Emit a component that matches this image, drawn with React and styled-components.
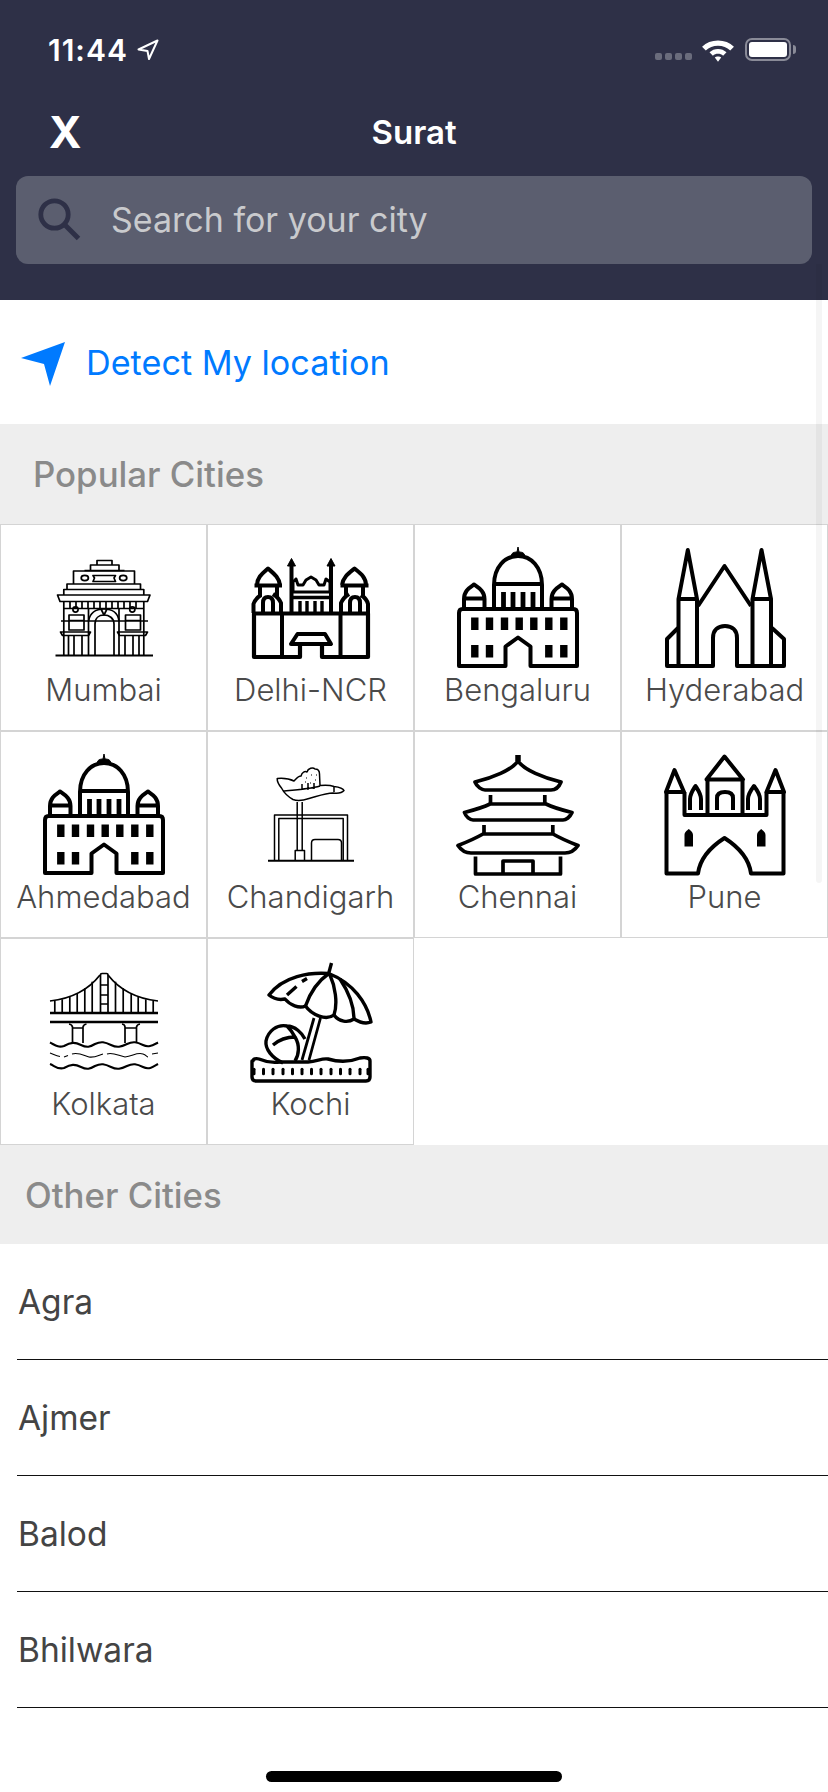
import React from 'react'
import styled, {createGlobalStyle} from 'styled-components'

const GlobalStyle = createGlobalStyle`
  html, body { margin: 0; padding: 0; background: #fff; }
  body { font-family: Inter, "Noto Sans", "Liberation Sans", sans-serif; }
  * { box-sizing: border-box; }
`

function IndiaGate() {
  return (
    <Drawing viewBox="0 0 122 122" $weight={1.7}>
      <path d="M12.5 108.5 H110" strokeWidth="2" />
      <path d="M54 18 V13.5 H69 V18 M47.5 23.5 V18 H76 V23.5 M41.5 23.5 H81.5" />
      <path d="M30.5 37 V24 H91.5 V37" />
      <ellipse cx="41.8" cy="31" rx="3.6" ry="2.6" />
      <ellipse cx="80.2" cy="31" rx="3.6" ry="2.6" />
      <path d="M50 28.5 H72.5 L71 31 L72.5 34.5 H50 L51.5 31Z" />
      <path d="M24 42.5 V37 H97.5 V42.5 M20.8 48 V42.5 H100.8 V48 M14.5 48 H107 L104.5 54.5 H17Z" />
      <path d="M20.8 54.5 V108 M100.8 54.5 V108 M20.8 61.5 H100.8 M27 54.5 V61.5 M33 54.5 V61.5 M39 54.5 V61.5 M45 54.5 V61.5 M51 54.5 V61.5 M57 54.5 V61.5 M63 54.5 V61.5 M69 54.5 V61.5 M75 54.5 V61.5 M81 54.5 V61.5 M87 54.5 V61.5 M93 54.5 V61.5" />
      <path d="M45.5 61.5 V108 M76 61.5 V108" />
      <path d="M45.5 74 C47 66 53 62 61 62 C69 62 75 66 76 74" />
      <path d="M52 108 V77 C52 71 56 68 61 68 C66 68 71 71 71 77 V108" />
      <path d="M58 62 L61 68 L64 62" />
      <circle cx="32.5" cy="62.5" r="2.6" />
      <circle cx="89.3" cy="62.5" r="2.6" />
      <path d="M26 68 H41 V83 H26Z M26 73.5 H41 M82.5 68 H97.5 V83 H82.5Z M82.5 73.5 H97.5 M18 74 H105" />
      <path d="M17.5 85 H47.5 L45.5 88.5 H19.5Z M74.5 85 H104.5 L102.5 88.5 H76.5Z" />
      <path d="M25.5 88.5 V108 M31 88.5 V108 M39 88.5 V108 M82 88.5 V108 M90 88.5 V108 M96 88.5 V108" />
    </Drawing>
  )
}

function RedFort() {
  return (
    <Drawing viewBox="0 0 122 122" $weight={4}>
      <path d="M4 66.5 H118 V110 H72 V97 H50 V110 H4Z" strokeWidth="4.2" />
      <path d="M32 66 V110 M90.5 66 V110" />
      <path d="M47.5 87 H75 L81 97 H41Z" />
      <path d="M41.5 66 V15 M81 66 V15" />
      <path d="M37.5 19 L41.5 11.5 L45.5 19Z M77 19 L81 11.5 L85 19Z" fill="#000" strokeWidth="1" />
      <path d="M43 35 V45 H80 V35 L76 32 L74 38 L69 38 L66 33 L61 30 L56 33 L53 38 L48 38 L46 32Z" strokeWidth="3" />
      <path d="M42 50.5 H81 M50 54 V66 M57 54 V66 M65 54 V66 M72 54 V66" strokeWidth="3.4" />
      <path d="M7 38 C7 30 13 26 18 21.5 C23 26 29 30 30 38 M4.5 38.5 H32 M10 39 V50 M27 39 V50" />
      <path d="M92 38 C93 30 99 26 104.5 21.5 C110 26 116 30 116 38 M90.5 38.5 H118.5 M96 39 V50 M113 39 V50" />
      <path d="M3.5 66 V57 C5 52 8 50 11 48 M31 66 V56 C29 51 26 49 23 47 M13 66 V56 C13 52 15 50 18 50 C21 50 23 52 23 56 V66" />
      <path d="M91 66 V56 C93 51 96 49 99 47 M118 66 V57 C117 52 114 50 111 48 M100 66 V56 C100 52 102 50 105 50 C108 50 110 52 110 56 V66" />
    </Drawing>
  )
}

function Dome() {
  const top = [17.8, 32.5, 47.5, 62.2, 76.8, 91.8, 106.8]
  const bottom = [17.8, 32.5, 91.8, 106.8]
  return (
    <Drawing viewBox="0 0 122 122" $weight={4}>
      <path d="M5.5 62 H116.5 Q120 62 120 66 V119 H73.5 V99.5 L61 90.5 L48.5 99.5 V119 H2 V66 Q2 62 5.5 62Z" />
      <path d="M37 61 V38 C37 20 48 9 61 9 C74 9 85 20 85 38 V61 M37 37 H85" />
      <path d="M54.5 8 Q55 5 60 5 L61 0 L62 5 Q67 5 67.5 8Z" fill="#000" strokeWidth="1" />
      <path d="M46.5 60 V45 M56 60 V45 M66 60 V45 M76 60 V45" strokeWidth="4.8" />
      <path d="M7 61 V52 C7 44 12 41 17 37.5 C22 41 27.5 44 27.5 52 V61 M7 51.5 H27.5" />
      <path d="M94.5 61 V52 C94.5 44 100 41 105 37.5 C110 41 115 44 115 52 V61 M94.5 51.5 H115" />
      {top.map(x => <rect key={x} x={x - 3.7} y="70.5" width="7.4" height="12.5" fill="#000" stroke="none" />)}
      {bottom.map(x => <rect key={x} x={x - 3.7} y="98" width="7.4" height="12.5" fill="#000" stroke="none" />)}
    </Drawing>
  )
}

function Church() {
  return (
    <Drawing viewBox="0 0 122 122" $weight={4}>
      <path d="M14.5 52 L23.8 3 L33 52Z M14.5 52 V118 M33 52 V118" />
      <path d="M88.5 52 L97.5 3 L107 52Z M88.5 52 V118 M107 52 V118" />
      <path d="M34 59 L60.5 19 L87 59" />
      <path d="M14 81 L3 92 V119 H49 V91 C49 83 54 79 61 79 C68 79 73 83 73 91 V119 H120 V92 L108 81" />
    </Drawing>
  )
}

function Chandigarh() {
  return (
    <Drawing viewBox="0 0 122 122" $weight={1.5}>
      <path d="M18 106.7 H104" strokeWidth="2" />
      <path d="M24.5 106 V61 H97.5 V106 M28.8 106 V64.5 H93.2 V106" />
      <path d="M47.2 96 V48 M52.2 96 V48 M45.2 106 V96.5 H54.5 V106" />
      <path d="M61.5 106 V89 Q61.5 85.5 65 85.5 H88 Q91.5 85.5 91.5 89 V106" />
      <path d="M27.2 24.5 C33 24 40 25 44 27 C46 25 48 22 51 22 C52 18 55 17 57 18 C58 14 63 13 65 15 C68 15 69.5 17 69.5 20 L70 31.5 C75 31 80 31 84 32.5 C88 33 93 34 94 36.5 C92 39 87 39.5 83 39 C76 39 68 42 59 44.5 C53 46.5 47 47 43 45.5 C37 42 34 39 31.5 34 C29 31 27 28 27.2 24.5Z" />
      <path d="M33 37 C45 36 60 35 70 32 M52 30 V36 M58 29 V36 M64 29 V35 M84 33 V38" />
      <path d="M56 24 h1 M61 21 h1 M65 26 h1 M60 29 h1 M55 28 h1 M66 21 h1" strokeWidth="1.2" />
    </Drawing>
  )
}

function Pagoda() {
  return (
    <Drawing viewBox="0 0 122 122" $weight={3.7}>
      <path d="M61 1 V7" strokeWidth="5.5" />
      <path d="M61 7 C55 16 35 24 18 28 C20 33 25 36 28 36 H94 C98 36 102 33 104 28 C87 24 67 16 61 7Z" />
      <path d="M33.5 41 V50 M87.8 41 V50" />
      <path d="M33 50 H89 C95 53 105 56 115 58.5 C113 63 109 66 106 66 H16 C13 66 9 63 7.5 58.5 C17 56 27 53 33 50Z" />
      <path d="M27 71 V80 M95.8 71 V80" />
      <path d="M26 80 H96 C103 84 112 88 121 91.5 C118 96 113 99 108 99 H14 C9 99 4 96 1 91.5 C10 88 19 84 26 80Z" />
      <path d="M18.5 102.5 V120 H103.5 V102.5 M46 120 V107 H76 V120" />
    </Drawing>
  )
}

function CityGate() {
  return (
    <Drawing viewBox="0 0 122 122" $weight={4}>
      <path d="M2 38 L10.5 16 L20 38Z M102.5 38 L111.5 16 L120 38Z" />
      <path d="M42.5 25.5 L60.5 2.5 L79 25.5Z M43.5 25 V60 M78.5 25 V60" />
      <path d="M2.5 38 V119.5 H34 C36 104 48 92 60.5 84 C73 92 85 104 87 119.5 H119.5 V38" />
      <path d="M20.5 38 V61 H102.5 V38" />
      <path d="M26 56 V45 C26 40 29 36 31.5 32 C34 36 37 40 37 45 V56 M84 56 V45 C84 40 87 36 90 32 C93 36 96 40 96 45 V56" />
      <path d="M53 56 V44 C53 40 56 38 61 38 C66 38 69 40 69 44 V56" />
      <path d="M20.5 92.5 V81 C20.5 78 23 76.5 24.8 75 C26.5 76.5 29 78 29 81 V92.5Z M93 92.5 V81 C93 78 95.5 76.5 97.2 75 C99 76.5 101.5 78 101.5 81 V92.5Z" fill="#000" stroke="none" />
    </Drawing>
  )
}

function Bridge() {
  const left = [[11.8, 39.7], [19.2, 38.3], [26.8, 35.7], [34.2, 32.3], [41.8, 27.3], [49.2, 20.7]]
  const right = [[72.5, 20.7], [80.2, 27.3], [88.2, 32.3], [95.2, 35.7], [102.8, 38.3], [110.2, 39.7]]
  return (
    <Drawing viewBox="0 0 122 122" $weight={1.7}>
      <path d="M7 40 C25 38 43 32 57 14 M115 40 C97 38 79 32 65 14" />
      <path d="M57.5 51.5 V14 Q57.5 12.5 59 12.5 H63.5 Q65 12.5 65 14 V51.5 M57.5 24 H65 M57.5 34 H65 M57.5 43 H65" />
      {[...left, ...right].map(([x, y]) => <path key={x} d={`M${x} ${y} V51`} />)}
      <path d="M7 52 H115 M7 61 H115" strokeWidth="2.4" />
      <path d="M26 63 Q29 63.5 29.5 66 V82 M43.5 63 Q40.5 63.5 40 66 V82 M29.5 67 H40 M79 63 Q82 63.5 82 66 V82 M97 63 Q94 63.5 93.5 66 V82 M82 67 H93.5" />
      <path d="M7 81.5 C12 84 15 87 21 85 C28 81 32 81 38 84 C44 87 47 86 52 83 C58 80 62 81 68 84 C74 87 78 86 84 83 C90 80 94 81 100 84 C106 87 110 84 115 81.5" strokeWidth="2.1" />
      <path d="M7 92 C10 93 13 95 17 95.5 M21 96 L25 94.5 M29 93 C35 91 40 94 46 96 C52 97 56 94 60 93 M64 93 C70 91 76 95 82 96 C90 95 94 91 100 93 C103 94 104 96 105 96 M109 93 L115 92" strokeWidth="1.1" />
      <path d="M7 103 C12 105 15 109 21 107 C28 103 32 103 38 106 C44 109 47 108 52 105 C58 102 62 103 68 106 C74 109 78 108 84 105 C90 102 94 103 100 106 C106 109 110 106 115 103" strokeWidth="2.1" />
    </Drawing>
  )
}

function Beach() {
  const dots = [4, 13.5, 23, 33, 42.5, 52, 61.5, 71, 81, 90.5, 100, 110, 118]
  return (
    <Drawing viewBox="0 0 122 122" $weight={3.4}>
      <path d="M81.5 2 L78.8 12" strokeWidth="3.4" />
      <path d="M78.8 12.5 C60 11 33 15 19 34 C25 39 30 39 35 38 C40 44 49 48 55.5 45 C62 54 76 60 84 54 C89 61 98 62 104 58 C109 61 116 63 121 61 C117 42 103 22 78.8 12.5Z" />
      <path d="M78.8 12.5 C68 20 60 32 55.5 45 M80 14 C85 25 88 42 84 54 M90 18 C98 30 104 44 104 58" />
      <path d="M37 34 L46.5 25.5 M52 20.5 L57 17.5" />
      <path d="M64 57 L52 99 M70.5 57 L59 99" strokeWidth="2.8" />
      <path d="M33 102 C22 97 15 88 16 80 C18 70 27 63 37 65 C45 65 52 72 55 78 M45 76 C38 76 30 78 23 84 M37 65 C40 68 43 72 45 76 C50 84 49 94 45 100" />
      <path d="M3 100 C3 98 6 97 9 98 C16 101 23 102 30 101 C40 101 48 101 58 101 C68 100 72 97 78 98 C88 101 100 101 110 97 C116 96 120 97 120 100 V116 Q120 120 116 120 H6 Q2 120 2 116 V100Z" />
      {dots.map(x => <rect key={x} x={x - 1.5} y="106.8" width="3" height="7.4" rx="1.5" fill="#000" stroke="none" />)}
    </Drawing>
  )
}

const popular = [
  {name: 'Mumbai', Icon: IndiaGate},
  {name: 'Delhi-NCR', Icon: RedFort},
  {name: 'Bengaluru', Icon: Dome},
  {name: 'Hyderabad', Icon: Church},
  {name: 'Ahmedabad', Icon: Dome},
  {name: 'Chandigarh', Icon: Chandigarh},
  {name: 'Chennai', Icon: Pagoda},
  {name: 'Pune', Icon: CityGate},
  {name: 'Kolkata', Icon: Bridge},
  {name: 'Kochi', Icon: Beach},
]

const others = ['Agra', 'Ajmer', 'Balod', 'Bhilwara']

function App() {
  return (
    <Wrap>
      <GlobalStyle />
      <Header>
        <StatusBar>
          <Clock>
            <Time>11:44</Time>
            <svg width="22" height="22" viewBox="0 0 22 22">
              <path d="M1.5 10.5 L20.5 1.5 L12 20 L10.5 12 Z" fill="none" stroke="#fff" strokeWidth="2" strokeLinejoin="round" />
            </svg>
          </Clock>
          <StatusIcons>
            <SignalDots>
              <Dot /><Dot /><Dot /><Dot />
            </SignalDots>
            <svg width="34" height="26" viewBox="0 0 32 24">
              <path d="M16 3 C22 3 27 5 31 9 L27.5 12.5 C24.5 9.5 20.5 8 16 8 C11.5 8 7.5 9.5 4.5 12.5 L1 9 C5 5 10 3 16 3Z" fill="#fff" />
              <path d="M16 11 C19 11 21.8 12 24 14.2 L20.8 17.4 C19.5 16.2 17.8 15.6 16 15.6 C14.2 15.6 12.5 16.2 11.2 17.4 L8 14.2 C10.2 12 13 11 16 11Z" fill="#fff" />
              <path d="M16 18 C17.3 18 18.2 18.3 19 19 L16 23 L13 19 C13.8 18.3 14.7 18 16 18Z" fill="#fff" />
            </svg>
            <Battery>
              <BatteryFill />
            </Battery>
          </StatusIcons>
        </StatusBar>
        <NavRow>
          <Close>X</Close>
          <Title>Surat</Title>
        </NavRow>
        <SearchBar>
          <svg width="48" height="48" viewBox="0 0 48 48">
            <circle cx="19.5" cy="18.5" r="13.7" fill="none" stroke="#2e3047" strokeWidth="4.8" />
            <path d="M29.5 28.5 L43.5 42.5" stroke="#2e3047" strokeWidth="5" />
          </svg>
          <Placeholder>Search for your city</Placeholder>
        </SearchBar>
      </Header>

      <LocationRow>
        <LocationIcon viewBox="0 0 46 46">
          <path d="M1 17 L45 1 L30 45 L24 23Z" fill="#007aff" />
        </LocationIcon>
        <LocationText>Detect My location</LocationText>
      </LocationRow>

      <SectionTitle $left={33} $height={100}>Popular Cities</SectionTitle>
      <CityGrid>
        {popular.map(c => (
          <CityCell key={c.name}>
            <c.Icon />
            <CityName>{c.name}</CityName>
          </CityCell>
        ))}
      </CityGrid>

      <SectionTitle $left={25} $height={99}>Other Cities</SectionTitle>
      <CityList>
        {others.map(c => <CityRow key={c}>{c}</CityRow>)}
      </CityList>

      <HomeArea>
        <HomeBar />
      </HomeArea>

      <ScrollThumb />
    </Wrap>
  )
}

const Wrap = styled.div`
  position: relative;
  width: 828px;
  height: 1792px;
  overflow: hidden;
  background: #fff;
`
const Header = styled.header`
  height: 300px;
  background: #2e3047;
  display: flex;
  flex-direction: column;
`
const StatusBar = styled.div`
  height: 99px;
  padding: 0 37px 0 48px;
  display: flex;
  align-items: center;
  justify-content: space-between;
`
const Clock = styled.div`
  display: flex;
  align-items: center;
  gap: 9px;
`
const Time = styled.span`
  color: #fff;
  font-size: 30px;
  font-weight: 600;
  line-height: 36px;
  letter-spacing: 1px;
`
const StatusIcons = styled.div`
  display: flex;
  align-items: center;
`
const SignalDots = styled.div`
  display: flex;
  gap: 3px;
  margin: 14px 9px 0 0;
`
const Dot = styled.span`
  width: 7px;
  height: 7px;
  border-radius: 2px;
  background: #6a6c7c;
`
const Battery = styled.div`
  position: relative;
  width: 46px;
  height: 23px;
  margin-left: 10px;
  padding: 2px;
  border: 2px solid #8a8b98;
  border-radius: 7px;
  &:after {
    content: '';
    position: absolute;
    right: -7px;
    top: 5px;
    width: 3px;
    height: 9px;
    border-radius: 0 3px 3px 0;
    background: #8a8b98;
  }
`
const BatteryFill = styled.div`
  width: 100%;
  height: 100%;
  border-radius: 3px;
  background: #fff;
`
const NavRow = styled.div`
  height: 66px;
  margin-bottom: 11px;
  padding: 0 50px;
  display: flex;
  align-items: center;
  position: relative;
  justify-content: center;
`
const Close = styled.span`
  position: absolute;
  left: 49px;
  top: 8px;
  color: #fff;
  font-size: 44px;
  line-height: 50px;
  font-weight: 700;
`
const Title = styled.span`
  color: #fff;
  font-size: 33px;
  font-weight: 600;
`
const SearchBar = styled.div`
  height: 88px;
  margin: 0 16px;
  padding-left: 19px;
  display: flex;
  align-items: center;
  background: #5b5e6f;
  border-radius: 12px;
`
const Placeholder = styled.span`
  margin: 0 0 2px 28px;
  color: #c9cacd;
  font-size: 34px;
`
const LocationRow = styled.div`
  height: 124px;
  padding-left: 20px;
  display: flex;
  align-items: center;
  gap: 20px;
`
const LocationIcon = styled.svg`
  width: 46px;
  height: 46px;
  margin-top: 4px;
  filter: blur(0.6px);
`
const LocationText = styled.span`
  color: #007aff;
  font-size: 34.2px;
`
const SectionTitle = styled.div`
  height: ${p => p.$height}px;
  padding-left: ${p => p.$left}px;
  display: flex;
  align-items: center;
  background: #eee;
  color: #8a8a8a;
  font-size: 34.8px;
  font-weight: 500;
`
const CityGrid = styled.div`
  display: grid;
  grid-template-columns: repeat(4, 207px);
  grid-auto-rows: 207px;
`
const CityCell = styled.div`
  border: 1px solid #d4d4d4;
  padding-top: 22px;
  display: flex;
  flex-direction: column;
  align-items: center;
`
const Drawing = styled.svg`
  width: 122px;
  height: 122px;
  flex: none;
  overflow: visible;
  fill: none;
  stroke: #000;
  stroke-width: ${p => p.$weight};
  stroke-linejoin: round;
`
const CityName = styled.span`
  color: #4a4a4a;
  font-size: 31px;
  line-height: 42px;
  font-weight: 300;
  white-space: nowrap;
`
const CityList = styled.div`
  display: flex;
  flex-direction: column;
`
const CityRow = styled.div`
  height: 116px;
  margin-left: 17px;
  padding-left: 1px;
  display: flex;
  align-items: center;
  border-bottom: 1px solid #111;
  color: #444;
  font-size: 33.5px;
`
const HomeArea = styled.div`
  padding-top: 63px;
  display: flex;
  justify-content: center;
`
const HomeBar = styled.div`
  width: 296px;
  height: 11px;
  border-radius: 6px;
  background: #000;
`
const ScrollThumb = styled.div`
  position: absolute;
  top: 264px;
  right: 6px;
  width: 6px;
  height: 619px;
  border-radius: 0 0 3px 3px;
  background: rgba(0, 0, 0, 0.04);
`

export default App
